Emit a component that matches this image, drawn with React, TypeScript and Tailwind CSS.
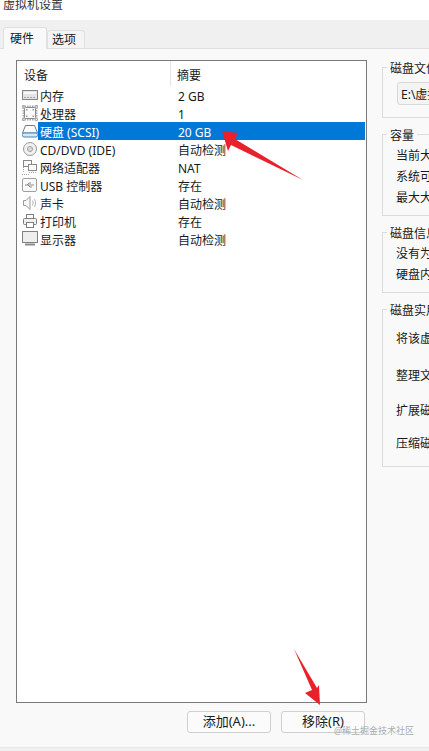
import type { ReactNode } from "react"

const font = "font-['Noto_Sans','Noto_Sans_CJK_SC',sans-serif]"

const Icon = ({ children }: { children: ReactNode }) => (
  <svg width="16" height="16" viewBox="0 0 16 16" fill="none" stroke="#7d7d7d" strokeWidth="1" className="shrink-0">
    {children}
  </svg>
)

const devices = [
  {
    name: "内存",
    summary: "2 GB",
    icon: (
      <Icon>
        <rect x="0.5" y="3.5" width="15" height="9" fill="#e4e4e4" stroke="#858585" />
        <path d="M2 6h12" stroke="#f7f7f7" strokeWidth="2" />
        <path d="M2 10.5h12" stroke="#a5a5a5" strokeDasharray="2 1" />
      </Icon>
    ),
  },
  {
    name: "处理器",
    summary: "1",
    icon: (
      <Icon>
        <path d="M0 1.5h16M0 14.5h16M1.5 0v16M14.5 0v16" stroke="#a8a8a8" strokeWidth="2" strokeDasharray="1.5 1" />
        <rect x="2.5" y="2.5" width="11" height="11" rx="1" fill="#fbfbfb" stroke="#8a8a8a" />
        <path d="M4 4h1.5v1.5H4zM10.5 4H12v1.5h-1.5zM4 10.5h1.5V12H4zM10.5 10.5H12V12h-1.5z" fill="#999" stroke="none" />
      </Icon>
    ),
  },
  {
    name: "硬盘 (SCSI)",
    summary: "20 GB",
    selected: true,
    icon: (
      <Icon>
        <path d="M3.5 2.5h9l3 7.5H.5z" fill="#fdfdfd" stroke="#5f7f9c" />
        <rect x="0.5" y="10" width="15" height="4" rx="1.5" fill="#d6e8f6" stroke="#4f86b5" />
      </Icon>
    ),
  },
  {
    name: "CD/DVD (IDE)",
    summary: "自动检测",
    icon: (
      <Icon>
        <circle cx="8" cy="8" r="6.5" fill="#f0f0f0" stroke="#9a9a9a" />
        <circle cx="8" cy="8" r="2.5" fill="#dcdcdc" stroke="#a0a0a0" />
      </Icon>
    ),
  },
  {
    name: "网络适配器",
    summary: "NAT",
    icon: (
      <Icon>
        <rect x="1.5" y="1.5" width="8" height="6" fill="#fafafa" stroke="#888" />
        <rect x="6.5" y="5.5" width="8" height="6" fill="#fafafa" stroke="#888" />
        <path d="M10.5 11.5v2M7 13.5h8M0 15.5h8M1.5 8v6" stroke="#a5a5a5" strokeDasharray="1 1" />
      </Icon>
    ),
  },
  {
    name: "USB 控制器",
    summary: "存在",
    icon: (
      <Icon>
        <rect x="0.5" y="1.5" width="14" height="13" rx="1.5" fill="#fafafa" stroke="#a0a0a0" />
        <path d="M3 8h9M5 8l2-2h2M6 8l2 2h2" stroke="#8c8c8c" />
      </Icon>
    ),
  },
  {
    name: "声卡",
    summary: "自动检测",
    icon: (
      <Icon>
        <path d="M1.5 5.5h2.5l4-4v13l-4-4H1.5z" fill="#f8f8f8" stroke="#999" />
        <path d="M10.5 5.5q1.5 2.5 0 5M12.5 4q2.5 4 0 8" stroke="#b5b5b5" />
      </Icon>
    ),
  },
  {
    name: "打印机",
    summary: "存在",
    icon: (
      <Icon>
        <rect x="4.5" y="1.5" width="7" height="4" fill="#fafafa" />
        <rect x="1.5" y="5.5" width="13" height="6" rx="1" fill="#f0f0f0" />
        <rect x="4.5" y="9.5" width="7" height="5" fill="#fff" />
      </Icon>
    ),
  },
  {
    name: "显示器",
    summary: "自动检测",
    icon: (
      <Icon>
        <rect x="0.5" y="0.5" width="15" height="11" fill="#eeeeee" stroke="#808080" />
        <path d="M3 13.5h10" stroke="#8a8a8a" strokeWidth="2" />
      </Icon>
    ),
  },
]

const Group = ({ title, className, children }: { title: string; className: string; children: ReactNode }) => (
  <fieldset className={`border border-[#dcdcdc] w-[200px] ${className}`}>
    <legend className="ml-[4px] px-[3px] h-4 text-[12px] leading-[19px] text-[#1a1a1a]">{title}</legend>
    {children}
  </fieldset>
)

export default function App() {
  return (
    <div className={`relative w-[429px] h-[751px] overflow-hidden bg-[#f9f9f9] text-[12px] text-[#1a1a1a] ${font}`}>
      {/* title, cut by the top of the crop */}
      <div className="h-5 bg-white overflow-hidden pl-[3px]">
        <div className="-mt-[3px] text-[12px] leading-4 text-[#333]">虚拟机设置</div>
      </div>

      {/* tabs */}
      <div className="h-[29px] bg-[#f0f0f0] border-b border-[#e0e0e0] flex items-end pl-[3px]">
        <div className="w-[44px] h-[22px] -mb-px bg-[#f9f9f9] border border-b-0 border-[#e0e0e0] rounded-t-[3px] flex items-center pl-[6px]">
          硬件
        </div>
        <div className="w-[38px] h-[18px] pt-[1px] bg-[#f4f4f4] border border-b-0 border-[#e0e0e0] rounded-t-[3px] flex items-center pl-[4px]">
          选项
        </div>
      </div>

      <div className="flex pl-4 pt-[11px]">
        {/* device list and buttons */}
        <div className="w-[351px] shrink-0">
          <div className="h-[643px] bg-white border border-[#7a7a7a]">
            <div className="h-[25px] flex items-center">
              <div className="w-[154px] h-full flex items-center pl-[7px] pt-[4px] border-r border-[#e5e5e5]">设备</div>
              <div className="pl-[6px] pt-[4px]">摘要</div>
            </div>
            {devices.map((d) => (
              <div key={d.name} className="h-[18px] flex items-center pl-[5px] pr-px">
                {d.icon}
                <div className={`flex-1 h-full flex items-center pt-[4px] ${d.selected ? "bg-[#0078d7] text-white" : ""}`}>
                  <div className="w-[133px] pl-[2px]">{d.name}</div>
                  <div className="pl-[7px]">{d.summary}</div>
                </div>
              </div>
            ))}
          </div>
          <div className="flex justify-end gap-[10px] pr-[2px] mt-[8px]">
            <button className="w-[84px] h-[22px] bg-[#fbfbfb] border border-[#d0d0d0] rounded-[3px] text-[13px]">添加(A)...</button>
            <button className="w-[84px] h-[22px] bg-[#fbfbfb] border border-[#d0d0d0] rounded-[3px] text-[13px]">移除(R)</button>
          </div>
        </div>

        {/* disk settings */}
        <div className="ml-[15px] -mt-[1px] flex flex-col gap-[8px] shrink-0">
          <Group title="磁盘文件(F)" className="h-[59px]">
            <div className="mt-[7px] ml-[14px] h-[23px] w-[180px] bg-[#f4f4f4] border border-[#d8d8d8] rounded-[3px] pl-[3px] pt-[2px] flex items-center">
              E:\虚拟机\Ubuntu
            </div>
          </Group>
          <Group title="容量" className="h-[90px]">
            <div className="ml-[13px] mt-[4px] flex flex-col gap-[1px] leading-[20px]">
              <div>当前大小:</div>
              <div>系统可用空间:</div>
              <div>最大大小:</div>
            </div>
          </Group>
          <Group title="磁盘信息" className="h-[69px]">
            <div className="ml-[13px] mt-[4px] flex flex-col gap-[1px] leading-[20px]">
              <div>没有为此硬盘预分配</div>
              <div>硬盘内容存储为单个文件</div>
            </div>
          </Group>
          <Group title="磁盘实用工具" className="h-[166px]">
            <div className="ml-[13px] mt-[12px] flex flex-col leading-[20px]">
              <div className="h-[37px]">将该虚拟机磁盘映射</div>
              <div className="h-[35px]">整理文件碎片并合并</div>
              <div className="h-[33px]">扩展磁盘容量</div>
              <div>压缩磁盘以回收空间</div>
            </div>
          </Group>
        </div>
      </div>

      {/* screenshot annotations */}
      <svg className="absolute inset-0 pointer-events-none" width="429" height="751" viewBox="0 0 429 751">
        <path d="M222 131L238 133L235 139L303 180L231 145L228 151Z" fill="#e8212b" />
        <path d="M320 705L305 693L312 690L294 649L317 688L319 685Z" fill="#e8212b" />
      </svg>
      <div className="absolute left-[334px] top-[723px] text-[9px] leading-4 text-[#9a9a9a] opacity-80 whitespace-nowrap">@稀土掘金技术社区</div>
      <div className="absolute left-0 right-0 top-[747px] h-[4px] bg-[#f0f0f0] border-t border-[#e6e6e6]" />
    </div>
  )
}
